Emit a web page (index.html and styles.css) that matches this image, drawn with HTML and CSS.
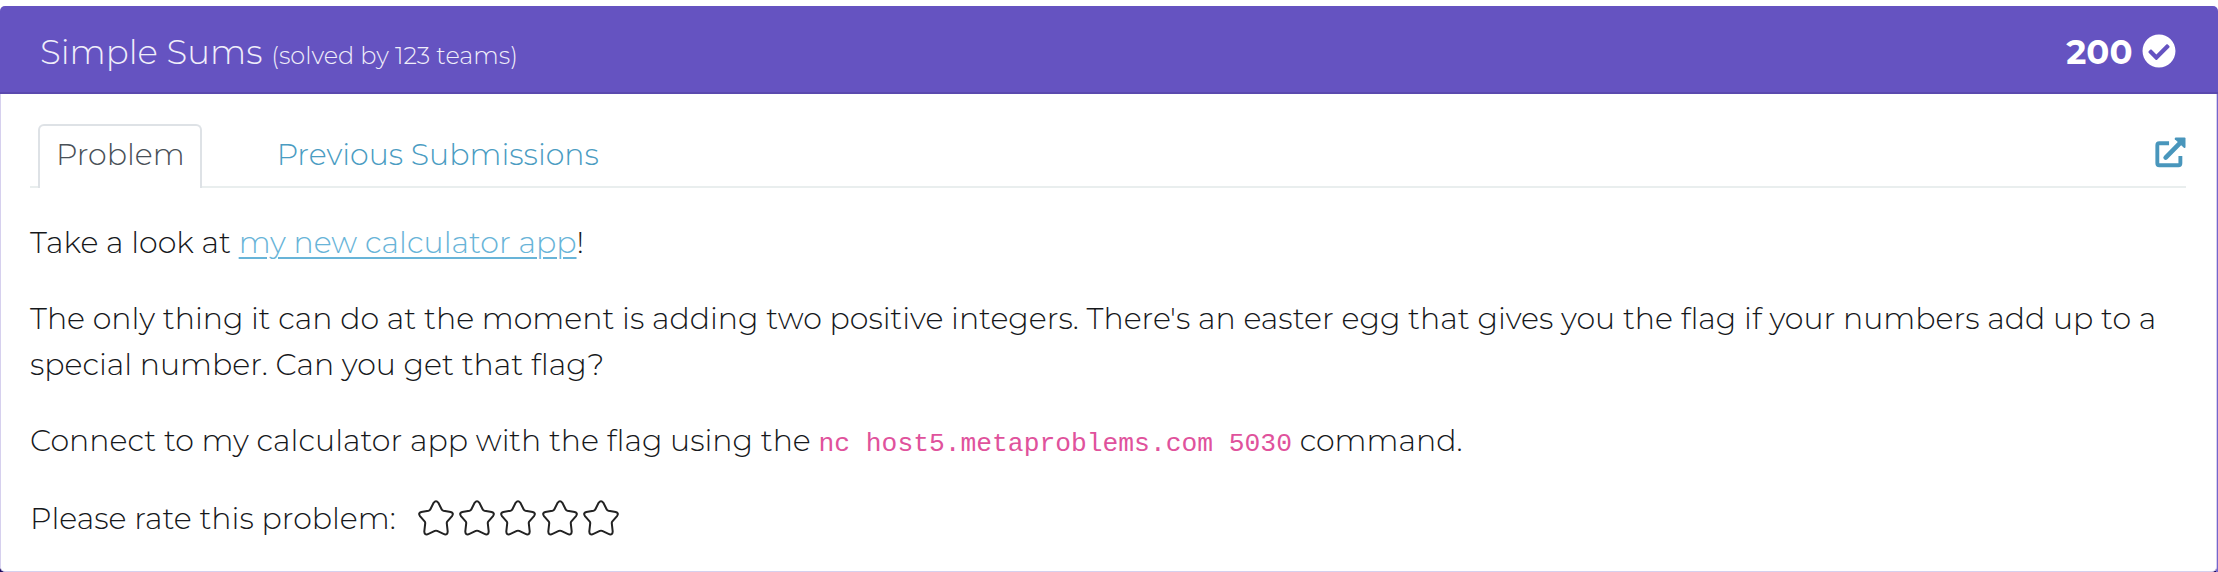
FILE: index.html
```html
<!DOCTYPE html>
<html lang="en">
<head>
<meta charset="utf-8">
<title>Simple Sums</title>
<link rel="stylesheet" href="styles.css">
</head>
<body>
<article class="card">
  <header class="card-header">
    <h1 class="title">Simple Sums <small class="solved">(solved by 123 teams)</small></h1>
    <div class="points">200
      <svg class="check" viewBox="0 0 512 512"><path fill="currentColor" d="M504 256c0 136.967-111.033 248-248 248S8 392.967 8 256 119.033 8 256 8s248 111.033 248 248zM227.314 387.314l184-184c6.248-6.248 6.248-16.379 0-22.627l-22.627-22.627c-6.248-6.249-16.379-6.249-22.628 0L216 308.118l-70.059-70.059c-6.248-6.248-16.379-6.248-22.628 0l-22.627 22.627c-6.248 6.248-6.248 16.379 0 22.627l104 104c6.249 6.249 16.379 6.249 22.628.001z"/></svg>
    </div>
  </header>
  <div class="card-body">
    <nav class="tabs">
      <a class="tab tab-active">Problem</a>
      <a class="tab">Previous Submissions</a>
      <a class="open-link"><svg class="open-icon" viewBox="0 0 32 32" fill="none" stroke="currentColor" stroke-width="4"><path d="M14.500 6.400H4.400Q2.400 6.400 2.400 8.400V27.200Q2.400 29.200 4.400 29.200H24.200Q26.200 29.200 26.200 27.200V19.500"/><path stroke-width="4.800" stroke-linecap="round" d="M11 21.200 26 6"/><path fill="currentColor" stroke="none" d="M21.200.5H30.500Q31.500.5 31.500 1.500V10.600Q31 12 29.800 11L20.500 2.300Q19.800 1 21.200.5Z"/></svg></a>
    </nav>
    <div class="content">
      <p>Take a look at <a class="link">my new calculator app</a>!</p>
      <p>The only thing it can do at the moment is adding two positive integers. There's an easter egg that gives you the flag if your numbers add up to a special number. Can you get that flag?</p>
      <p>Connect to my calculator app with the flag using the <code>nc host5.metaproblems.com 5030</code> command.</p>
      <div class="rating">
        <span>Please rate this problem:</span>
        <div class="stars">
          <svg class="star" viewBox="0 0 36 36"><use href="#star"/></svg>
          <svg class="star" viewBox="0 0 36 36"><use href="#star"/></svg>
          <svg class="star" viewBox="0 0 36 36"><use href="#star"/></svg>
          <svg class="star" viewBox="0 0 36 36"><use href="#star"/></svg>
          <svg class="star" viewBox="0 0 36 36"><use href="#star"/></svg>
        </div>
      </div>
    </div>
  </div>
</article>
<svg class="defs"><defs><path id="star" d="M15.600 2.800Q18 -.2 20.400 2.800L23.600 9.200Q24.200 10.400 25.500 10.700L32.700 12Q36 13 34.200 15.800L29.400 21.300Q28.600 22.200 28.800 23.500L29.700 31.500Q29.600 35 26.500 34.300L19.200 30.900Q18 30.400 16.800 30.900L9.500 34.300Q6.400 35 6.300 31.500L7.200 23.500Q7.400 22.200 6.600 21.300L1.800 15.800Q0 13 3.300 12L10.500 10.700Q11.800 10.400 12.400 9.200Z"/></defs></svg>
</body>
</html>
```

FILE: styles.css
```css
* { box-sizing: border-box; }

body {
  margin: 0;
  height: 572px;
  overflow: hidden;
  padding-top: 6px;
  background: linear-gradient(to right, transparent 2216px, #7567cb 2216px) 0 20px no-repeat,
    linear-gradient(#1c0b5e, #1c0b5e) 0 100% / 100% 4px no-repeat #fff;
  font-family: Montserrat, Inter, sans-serif;
  font-weight: 300;
  font-size: 30.02px;
  line-height: 46px;
  color: #16181b;
}

.card {
  height: 566px;
  width: 2216.5px;
  border: 1px solid #d6d0ee;
  border-top: 0;
  border-radius: 5px;
  background: #fff;
}

.card-header {
  display: flex;
  justify-content: space-between;
  align-items: center;
  height: 88px;
  margin: 0 -2px 0 -1px;
  padding: 0 42px 0 40px;
  border-bottom: 2px solid #5a49ae;
  border-radius: 5px 5px 0 0;
  background: #6553c1;
  color: #fff;
}

.title {
  margin: 10px 0 0;
  font-size: 34px;
  font-weight: 300;
  line-height: 46px;
  color: #f0eefa;
}

.solved { font-size: 23.95px; }

.points {
  display: flex;
  align-items: center;
  gap: 9px;
  margin-top: 6px;
  font-size: 34px;
  font-weight: 700;
}

.check { width: 34px; height: 34px; margin-top: -3px; }

.card-body { padding: 30px 30px 0 29px; }

.tabs {
  display: flex;
  height: 64px;
  padding-left: 8px;
  border-bottom: 2px solid #e9eeee;
}

.tab {
  height: 62px;
  padding: 8px 16px;
  border: 2px solid transparent;
  border-bottom: 0;
  line-height: 42px;
  color: #4a9cc2;
}

.tab-active {
  height: 64px;
  margin-right: 57px;
  padding-right: 15px;
  border-color: #dee2e6;
  border-radius: 6px 6px 0 0;
  background: #fff;
  color: #495057;
}

.open-link { margin-left: auto; padding-top: 13px; line-height: 0; color: #4996bc; }
.open-icon { width: 31px; height: 31px; }

.content { padding-top: 32px; }
.content p { margin: 0 0 30px; }

.link {
  color: #68b4d8;
  text-decoration: underline;
  text-decoration-thickness: 2px;
  text-underline-offset: 4px;
}

code {
  font-family: "Liberation Mono", monospace;
  font-size: 26.3px;
  font-weight: 400;
  line-height: 1;
  color: #e0529c;
}

.rating { display: flex; align-items: center; gap: 22px; margin-top: 32px; }
.stars { display: flex; gap: 5.4px; margin-top: -2px; }
.star { width: 36px; height: 36px; fill: none; stroke: #222; stroke-width: 2; }
.defs { display: none; }
```
